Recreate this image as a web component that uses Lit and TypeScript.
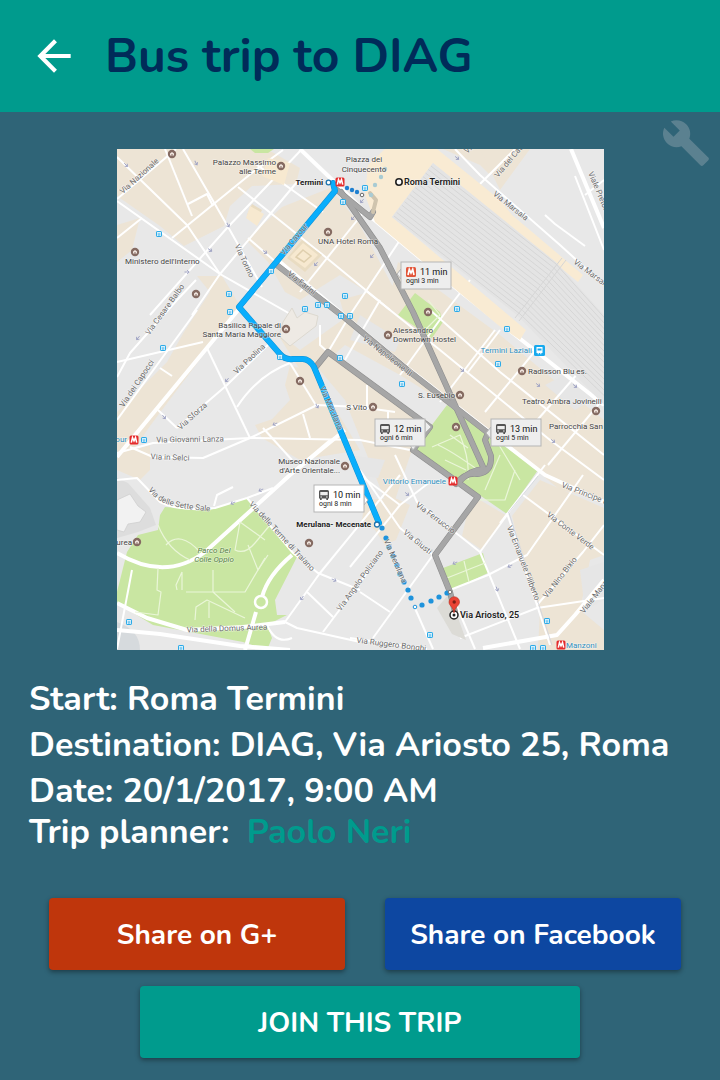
import { LitElement, html, css, svg } from "lit";
import { customElement } from "lit/decorators.js";

type Street = { t: string; x: number; y: number; r: number; start?: boolean };
type Place = { t: string; x: number; y: number; kind?: string; anchor?: string };

const blocks = [
  "M117 149H254L272 152 300 168 296 184 252 186 230 206 224 226 184 246 160 226 117 196Z",
  "M246 240L282 207 330 188 358 222 368 240 400 300 380 300 340 275 300 300 285 292 268 262Z",
  "M117 225L140 218 132 250 117 262Z",
  "M197 276L222 276 240 306 207 350 150 426 130 455 117 455 117 412 167 362 184 332 210 292Z",
  "M275 330L300 350 345 318 340 300 395 285 430 310 480 350 520 385 604 440V500L560 490 500 440 440 400 400 375 345 345 315 372 330 400 360 450 300 460 262 438 255 425 317 404 300 370Z",
  "M398 262L425 280 500 335 560 385 604 420V470L540 440 470 395 420 360 385 320Z",
  "M290 365L312 372 320 405 262 430 290 400 285 385Z",
  "M330 352L430 428 412 450 395 500 385 500 345 400 318 368Z",
  "M365 500L395 498 410 505 396 540 385 545 375 530 362 520Z",
  "M443 149H512L490 175 480 165Z",
  "M500 190L530 149H480Z",
  "M480 500L507 516 482 550 462 536 468 510Z",
  "M512 516L540 480 604 508V555L590 560 580 610 604 630V650H538L540 610 528 580Z",
  "M117 455L150 445 150 470 140 480 117 470Z",
];

const greys = [
  "M360 315L400 340 395 352 350 340Z",
  "M545 385L570 372 595 398 575 410Z",
  "M408 308L425 300 430 305 418 318Z",
  "M580 570L604 562V600L585 610Z",
  "M350 455L385 460 378 478 355 475Z",
];

const parks = [
  "M165 507L210 510 247 498 297 557 275 600 277 615 287 615 267 625 272 638 267 650 243 642 153 625 117 603V592L127 552 138 535 158 530 160 515Z",
  "M447 405L538 470 507 514 478 494 460 480 413 450Z",
  "M443 568L483 553 488 573 452 590Z",
  "M398 315L415 293 440 312 443 322 432 338 420 330Z",
  "M250 149H274L268 153H255Z",
];

const roads = [
  "M117 199L176 149",
  "M117 157L187 225 220 274",
  "M117 201L220 274 292 315",
  "M165 149L192 216",
  "M183 149L227 225 262 287",
  "M172 238L253 172 283 150",
  "M188 204L207 194 213 206",
  "M238 187L323 255 390 310",
  "M253 162L323 212",
  "M150 315L227 228 302 149",
  "M192 315L220 274 297 182",
  "M117 238L142 218",
  "M248 238L277 263",
  "M300 292L363 213",
  "M117 362L160 352 203 342",
  "M117 377L130 353 177 300 196 280",
  "M117 420L197 310",
  "M160 368L172 376",
  "M177 428L227 385 270 343",
  "M158 410L177 428",
  "M207 348L250 438",
  "M237 407Q258 375 290 363",
  "M117 453L153 443 250 438 360 440 410 450",
  "M130 447L153 457 203 458 250 438",
  "M250 438L317 405 360 407 395 412",
  "M290 363L317 407",
  "M263 428L292 460",
  "M303 414L310 438",
  "M330 440L283 480",
  "M320 325L320 345 328 352 350 315 400 240",
  "M380 300L345 360",
  "M367 385V410",
  "M388 412V428",
  "M400 375L447 310 470 280",
  "M430 310L500 372 604 455",
  "M468 372L500 330",
  "M440 402L495 330",
  "M485 412L540 345",
  "M520 440L585 365",
  "M548 465L604 398",
  "M365 290L440 350 550 440 604 480",
  "M350 567L400 505 430 482",
  "M360 470L400 528 433 555",
  "M395 455L417 502 480 552",
  "M400 505L360 475",
  "M117 480L137 478 160 502Q180 512 215 508L247 498 273 488",
  "M214 506L217 495 233 487",
  "M247 498L293 553 318 573 360 590",
  "M285 622L320 573 400 475",
  "M285 622L297 628 360 642",
  "M267 625Q276 645 292 638",
  "M323 632L373 565",
  "M307 592L333 617",
  "M360 592L390 612",
  "M117 649L132 570",
  "M350 638L427 649",
  "M460 638L537 608 604 598",
  "M480 552L520 649",
  "M373 638L433 555",
  "M450 590L475 649",
  "M414 606L433 649",
  "M507 515L480 552",
  "M450 590L488 575 527 555 583 475",
  "M523 495L604 555",
  "M537 605L583 552 604 525",
  "M545 465L500 523",
  "M455 149L480 175 560 245 604 285",
  "M480 184L515 149",
  "M545 215L555 224 585 246",
  "M575 176L604 250",
  "M585 195L604 180",
];

const mainRoads = [
  "M336 190L239 309 117 457",
  "M280 262L400 362 545 475 604 502",
  "M372 218L462 293 604 405",
  "M379 525L313 365",
  "M300 149L345 192 365 212",
  "M483 648L557 635 575 615 604 580",
  "M571 149L604 228",
  "M117 603L147 618 187 630 243 627 285 622",
  "M117 553Q165 582 205 552L290 475 345 430",
  "M117 630L160 634 240 646 290 650",
];

const paths = [
  "M158 525Q168 550 190 560 M166 545Q180 530 200 552",
  "M158 568L157 590 161 592 158 615 135 612",
  "M182 572L176 585 177 590M182 572V590M186 592H245L265 558 M213 570V592L235 612",
  "M240 522L235 550Q245 555 255 543L270 525M240 522L265 540 M248 545L258 570 268 555",
  "M195 620L196 607 207 600 245 618 M209 602V618",
  "M432 447L460 435Q470 460 468 480 M438 445Q450 450 478 470M450 435L468 448M445 460L466 470M490 430L520 480M500 455L485 490M478 500L505 500 515 470",
  "M447 578L485 563M464 561L469 582",
  "M428 300L440 315 425 330",
];

const streets: Street[] = [
  { t: "Via Nazionale", x: 141, y: 178, r: -42 },
  { t: "Via Torino", x: 242, y: 262, r: 65 },
  { t: "Via Cavour", x: 296, y: 241, r: -50 },
  { t: "Via Farini", x: 300, y: 285, r: 38 },
  { t: "Via Cesare Balbo", x: 167, y: 311, r: -54 },
  { t: "Via dei Capocci", x: 139, y: 385, r: -56 },
  { t: "Via Paolina", x: 251, y: 361, r: -43 },
  { t: "Via Sforza", x: 194, y: 418, r: -42 },
  { t: "Via Giovanni Lanza", x: 190, y: 442, r: -1 },
  { t: "Via in Selci", x: 170, y: 460, r: 2 },
  { t: "Via delle Terme di Traiano", x: 280, y: 538, r: 47 },
  { t: "Via della Domus Aurea", x: 227, y: 631, r: -2 },
  { t: "Via Merulana", x: 329, y: 409, r: 67 },
  { t: "Via Merulana", x: 393, y: 562, r: 67 },
  { t: "Via Napoleone III", x: 386, y: 358, r: 38 },
  { t: "Via Ferruccio", x: 434, y: 520, r: 37 },
  { t: "Via Giusti", x: 416, y: 544, r: 39 },
  { t: "Via Angelo Poliziano", x: 362, y: 582, r: -54 },
  { t: "Via Ruggero Bonghi", x: 391, y: 647, r: 7 },
  { t: "Via Emanuele Filiberto", x: 521, y: 564, r: 69 },
  { t: "Via Nino Bixio", x: 562, y: 579, r: -52 },
  { t: "Viale Manzoni", x: 584, y: 614, r: -52, start: true },
  { t: "Via Conte Verde", x: 569, y: 533, r: 37 },
  { t: "Via Principe Eugenio", x: 561, y: 487, r: 21, start: true },
  { t: "Via Marsala", x: 509, y: 208, r: 38 },
  { t: "Via Marsala", x: 573, y: 263, r: 37, start: true },
  { t: "Viale Pretoriano", x: 588, y: 173, r: 67, start: true },
  { t: "Via del Castro", x: 498, y: 178, r: -50, start: true },
  { t: "Via", x: 467, y: 154, r: -40, start: true },
];

const places: Place[] = [
  { t: "Palazzo Massimo", x: 276, y: 165, anchor: "end" },
  { t: "alle Terme", x: 276, y: 174, anchor: "end" },
  { t: "Piazza dei", x: 364, y: 162, anchor: "middle" },
  { t: "Cinquecento", x: 364, y: 172, anchor: "middle" },
  { t: "Ministero dell'Interno", x: 125, y: 264 },
  { t: "UNA Hotel Roma", x: 318, y: 244 },
  { t: "Basilica Papale di", x: 281, y: 328, anchor: "end" },
  { t: "Santa Maria Maggiore", x: 281, y: 337, anchor: "end" },
  { t: "Alessandro", x: 393, y: 333 },
  { t: "Downtown Hostel", x: 393, y: 342 },
  { t: "Termini Laziali", x: 532, y: 353, anchor: "end", kind: "transit" },
  { t: "Radisson Blu es.", x: 528, y: 374 },
  { t: "S. Eusebio", x: 455, y: 398, anchor: "end" },
  { t: "Teatro Ambra Jovinelli", x: 522, y: 404 },
  { t: "Parrocchia San", x: 549, y: 429 },
  { t: "S Vito", x: 367, y: 410, anchor: "end" },
  { t: "Museo Nazionale", x: 340, y: 464, anchor: "end" },
  { t: "d'Arte Orientale...", x: 340, y: 473, anchor: "end" },
  { t: "Vittorio Emanuele", x: 446, y: 484, anchor: "end", kind: "transit" },
  { t: "our", x: 127, y: 442, anchor: "end", kind: "transit" },
  { t: "urea", x: 132, y: 545, anchor: "end" },
  { t: "Parco Del", x: 214, y: 553, anchor: "middle", kind: "park" },
  { t: "Colle Oppio", x: 214, y: 562, anchor: "middle", kind: "park" },
  { t: "Manzoni", x: 566, y: 648, kind: "transit" },
  { t: "Termini", x: 323, y: 185, anchor: "end", kind: "stop minor" },
  { t: "Roma Termini", x: 404, y: 185, kind: "stop" },
  { t: "Merulana- Mecenate", x: 371, y: 527, anchor: "end", kind: "stop minor" },
  { t: "Via Ariosto, 25", x: 460, y: 618, kind: "stop" },
];

const pois = [
  [172, 154], [281, 166], [135, 252], [328, 232], [196, 294], [286, 329], [388, 335],
  [522, 371], [460, 395], [596, 411], [373, 407], [345, 466], [300, 381], [428, 312],
  [456, 427], [137, 542], [309, 543],
];

const busStops = [
  [159, 234], [229, 294], [230, 312], [163, 348], [271, 271], [345, 296], [305, 309],
  [318, 305], [327, 305], [341, 316], [350, 316], [280, 357], [340, 358], [457, 309],
  [507, 329], [498, 364], [402, 384], [144, 440], [129, 622], [181, 648], [365, 188],
  [343, 202], [430, 635], [533, 648], [543, 648], [547, 621],
];

const metros = [[340, 182], [134, 440], [453, 481], [561, 645]];

const walkDots = [
  [382, 528], [386, 538], [389, 547], [393, 556], [397, 565], [400, 574], [404, 582],
  [408, 590], [411, 598], [422, 605], [431, 601], [439, 597], [447, 593],
];

const arrows = [
  [228, 225, 60], [187, 272, 0], [210, 250, 35], [126, 165, 45], [196, 163, 60], [265, 252, 35],
  [316, 264, 130], [353, 218, 130], [138, 338, 130], [227, 380, 130], [317, 406, 60],
  [275, 424, 155], [164, 417, 50], [457, 158, 40], [362, 201, 130], [372, 256, 130],
  [462, 370, 40], [538, 385, 40], [575, 386, 40], [553, 441, 40], [407, 494, 40], [455, 563, 155],
  [510, 566, 155], [497, 589, 70], [334, 580, 25], [302, 598, 125], [233, 503, 155], [261, 490, 155],
];

const metroM = (x: number, y: number, s: number, fill: string) => svg`
  <rect x=${x - s / 2} y=${y - s / 2} width=${s} height=${s} rx="1.5" fill=${fill}></rect>
  <path transform="translate(${x - s / 2} ${y - s / 2}) scale(${s / 10})"
    d="M2 8 3.3 2.4 5 6 6.7 2.4 8 8" fill="none" stroke="#fff" stroke-width="1.7"></path>`;

const busIcon = (x: number, y: number) => svg`
  <g transform="translate(${x} ${y})">
    <path fill="#555" d="M1.5 0h7Q10 0 10 1.5V8.5H9v1.5H7.300V8.500H2.700V10H1V8.500H0V1.500Q0 0 1.500 0Z"></path>
    <path fill="#eee" d="M1.300 2h7.400v3.200H1.300ZM1.400 6.400h1.600v1.200H1.400ZM7 6.400h1.600v1.200H7Z"></path>
  </g>`;

const callout = (x: number, y: number, title: string, sub: string, tail: string, light = false, metro = false) => svg`
  <path class=${light ? "callout light" : "callout"} d=${tail}></path>
  <rect class=${light ? "callout light" : "callout"} x=${x} y=${y} width="50" height="27"></rect>
  ${metro ? metroM(x + 10, y + 10, 10, "#e2553a") : busIcon(x + 5, y + 5)}
  <text class="time" x=${x + 19} y=${y + 13}>${title}</text>
  <text class="every" x=${x + 5} y=${y + 21}>${sub}</text>`;

@customElement("trip-map")
export class TripMap extends LitElement {
  static styles = css`
    :host { display: block; font-weight: 400; }
    svg { display: block; width: 100%; height: auto; font-family: Roboto, "Liberation Sans", sans-serif; }
    .beige { fill: #ede4d5; }
    .grey { fill: #e6e6e6; }
    .park { fill: #c9e6a2; }
    .road { fill: none; stroke: #fff; stroke-width: 2; stroke-linejoin: round; }
    .main { stroke-width: 4; }
    .path { stroke-width: 1.2; stroke: #eaf6d8; }
    .hall { fill: #f9ebd3; }
    .track { fill: none; stroke: #d6d6d6; stroke-width: 1; }
    .route { fill: none; stroke-linejoin: round; stroke-linecap: round; }
    .alt-edge { stroke: #8f8f8f; stroke-width: 6; }
    .alt { stroke: #a6a6a6; stroke-width: 4.8; }
    .best-edge { stroke: #1391d4; stroke-width: 6; }
    .best { stroke: #0aaefc; stroke-width: 5; }
    .street, .place { font-size: 8px; paint-order: stroke; stroke: #fff; stroke-opacity: 0.5; stroke-width: 1.2px; }
    .street { fill: #6b6b6b; text-anchor: middle; }
    .start { text-anchor: start; }
    .place { fill: #444; }
    .transit { fill: #2f8fc0; }
    .park-name { fill: #55803f; font-style: italic; }
    .stop { fill: #222; font-size: 9px; font-weight: 600; }
    .minor { font-size: 8px; font-weight: 700; }
    .callout { fill: #eee; stroke: #b5b5b5; stroke-width: 1; }
    .light { fill: #fff; }
    .time { font-size: 9px; fill: #111; }
    .every { font-size: 7px; fill: #222; }
  `;

  private poi([x, y]: number[]) {
    return svg`<circle cx=${x} cy=${y} r="4.200" fill="#856b62"></circle>
      <path d="M${x - 2} ${y + 1.6}V${y - 0.4}L${x} ${y - 2}L${x + 2} ${y - 0.4}V${y + 1.6}Z" fill="#f1e6df"></path>
      <path d="M${x - 0.5} ${y + 1.6}v-1.500h1v1.500z" fill="#856b62"></path>`;
  }

  private busStop([x, y]: number[]) {
    return svg`<rect x=${x - 2.5} y=${y - 2.5} width="5" height="5" rx="0.600" fill="#d8f0fc" stroke="#2aaae8"></rect>
      <path d="M${x - 1.2} ${y}h2.400M${x - 1} ${y + 1.3}h.6M${x + 0.5} ${y + 1.3}h.6" stroke="#2aaae8" stroke-width="0.900"></path>`;
  }

  render() {
    const tracks = Array.from({ length: 15 }, (_, i) => {
      const k = i / 14;
      const x1 = 431 - k * 37, y1 = 166 + k * 50;
      const x2 = 556 - k * 36, y2 = 264 + k * 50;
      return `M${x1} ${y1}L${x2} ${y2}L${620 - k * 4} ${335 + k * 72}`;
    });
    const alternatives = [
      "M337 190L370 217 373 212",
      "M341 192L380 248 413 312 455 405 484 469Q470 470 460 481",
      "M278 266L345 318 410 372 488 433 485 440 491 456Q492 472 478 474 465 472 456 484",
      "M315 368L328 352 430 427 413 450 452 478 478 497 435 555 450 592 455 612",
    ];
    const best = "M333 183L335 191 239 307 280 354Q285 360 293 359H301Q309 358 314 367L379 523";
    return html`
      <svg viewBox="117 149 487 501" role="img" aria-label="Map of the route from Roma Termini to Via Ariosto, 25">
        <rect x="117" y="149" width="487" height="501" fill="#e8e8e8"></rect>
        ${blocks.map((d) => svg`<path class="beige" d=${d}></path>`)}
        ${greys.map((d) => svg`<path class="grey" d=${d}></path>`)}
        <path fill="#ddd" d="M117 478L128 483 150 508 156 525 138 532 117 538Z"></path>
        <path fill="#f2f2f2" stroke="#cfcfcf" stroke-width="0.800" d="M117 500L130 494 138 506 146 512 140 522 128 524 124 532 117 530Z"></path>
        <path fill="#d6dadd" d="M117 622Q140 630 140 650H117Z"></path>
        ${parks.map((d) => svg`<path class="park" d=${d}></path>`)}
        ${roads.map((d) => svg`<path class="road" d=${d}></path>`)}
        ${mainRoads.map((d) => svg`<path class="road main" d=${d}></path>`)}
        ${paths.map((d) => svg`<path class="road path" d=${d}></path>`)}
        <path class="road main" d="M292 555Q268 575 262 597M256 612L245 650"></path>
        <circle cx="261" cy="602" r="6" fill="#c9e6a2" stroke="#fff" stroke-width="2.500"></circle>
        <path class="road" stroke-width="4" d="M507 513L550 645"></path>
        <path d="M509 513L552 645M538 476L508 513" fill="none" stroke="#cfd2dc" stroke-width="0.800"></path>
        <path class="hall" d="M385 149H437L500 200 512 215 583 275 578 282 556 264 433 163 392 217 526 330 520 340 498 325 375 222 365 195 368 165Z"></path>
        <path fill="#e4e4e4" d="M433 163L557 263 604 315V405L517 315 392 217Z"></path>
        ${tracks.map((d) => svg`<path class="track" d=${d}></path>`)}
        <path class="track" d="M562 258L515 318M566 260L519 321"></path>
        <path fill="#e9dcc2" d="M252 204L262 210 256 222 247 215ZM302 240L322 255 305 272 287 258Z"></path>
        <path fill="#f7e9d0" d="M268 158L290 163 284 185 262 176ZM250 206L264 214 257 226 246 218ZM303 243L318 255 305 268 290 257Z"></path>
        <path fill="none" stroke="#dfcfae" stroke-width="1.500" d="M303 250L311 256 304 262 296 257Z"></path>
        <path fill="#eeeae4" stroke="#ddd9d0" d="M283 322L292 308 297 318 305 312 318 316 316 326 290 346 279 336Z"></path>
        <path fill="#dcdbd6" d="M437 608L449 594 456 612 466 640 452 634Z"></path>
        ${arrows.map(([x, y, r]) => svg`<path transform="translate(${x} ${y}) rotate(${r})" d="M-2.500 0H2M0-1.800 2.200 0 0 1.800" fill="none" stroke="#9fa3c4" stroke-width="0.900"></path>`)}
        ${alternatives.map((d) => svg`<path class="route alt-edge" d=${d}></path>`)}
        ${alternatives.map((d) => svg`<path class="route alt" d=${d}></path>`)}
        <path class="route" stroke="#cfc4ae" stroke-width="4" d="M373 212L376 200 370 193"></path>
        ${[[371, 195], [375, 185], [381, 177], [385, 169]].map(([x, y]) => svg`<circle cx=${x} cy=${y} r="2.200" fill="#a9cbd3"></circle>`)}
        <path class="route best-edge" d=${best}></path>
        <path class="route best" d=${best}></path>
        ${walkDots.map(([x, y]) => svg`<circle cx=${x} cy=${y} r="2.600" fill="#1e93dc"></circle>`)}
        ${pois.map((p) => this.poi(p))}
        ${busStops.map((p) => this.busStop(p))}
        ${metros.map(([x, y]) => metroM(x, y, 9, "#e52b2b"))}
        <rect x="534" y="345" width="11" height="11" rx="1.500" fill="#16a9ee"></rect>
        <path d="M536.500 347h6v6h-1.200v1.200h-1v-1.200h-1.600v1.200h-1v-1.200h-1.200Z" fill="#fff"></path>
        <path d="M537.500 348.500h4v2h-4Z" fill="#16a9ee"></path>
        ${streets.map((s) => svg`<text class=${s.start ? "street start" : "street"} transform="translate(${s.x} ${s.y}) rotate(${s.r})">${s.t}</text>`)}
        <path id="sette-sale" fill="none" d="M148 490C160 506 175 508 216 512"></path>
        <text class="street start"><textPath href="#sette-sale">Via delle Sette Sale</textPath></text>
        ${places.map((p) => svg`<text class="place ${p.kind === "park" ? "park-name" : p.kind ?? ""}" text-anchor=${p.anchor ?? "start"} x=${p.x} y=${p.y}>${p.t}</text>`)}
        ${[[347, 188], [352, 190], [357, 192]].map(([x, y]) => svg`<circle cx=${x} cy=${y} r="2.200" fill="#1e7fd0"></circle>`)}
        <circle cx="362" cy="195" r="1.800" fill="#fff" stroke="#666"></circle>
        <circle cx="415" cy="607" r="1.800" fill="#fff" stroke="#1e93dc"></circle>
        <circle cx="450" cy="592" r="1.800" fill="#fff" stroke="#777"></circle>
        <circle cx="328.500" cy="182.500" r="2.300" fill="#fff" stroke="#1c74ae" stroke-width="1.300"></circle>
        <circle cx="377" cy="524.500" r="2.500" fill="#fff" stroke="#1c74ae" stroke-width="1.300"></circle>
        <circle cx="399" cy="182" r="3.200" fill="#fff" stroke="#222" stroke-width="1.600"></circle>
        ${callout(401, 262, "11 min", "ogni 3 min", "M401 269L397 274 401 279Z", false, true)}
        ${callout(375, 419, "12 min", "ogni 6 min", "M425 421L431 427 425 433ZM410 445L413 450 417 445Z")}
        ${callout(491, 419, "13 min", "ogni 5 min", "M491 427L486 433 491 439Z")}
        ${callout(314, 485, "10 min", "ogni 8 min", "M364 495L368 500 364 505Z", true)}
        <circle cx="454" cy="615" r="4" fill="#fff" stroke="#222" stroke-width="1.500"></circle>
        <circle cx="454" cy="615" r="1.500" fill="#222"></circle>
        <path d="M454 613C453 606 449 606 449 602A5.200 5.200 0 0 1 459.500 602C459.500 606 455 606 454 613Z" fill="#ea4335" stroke="#b93221" stroke-width="0.600"></path>
        <circle cx="454.200" cy="602" r="1.700" fill="#7b1f16"></circle>
      </svg>`;
  }
}

@customElement("app-root")
export class AppRoot extends LitElement {
  static styles = css`
    :host {
      display: block;
      min-height: 100vh;
      background: #2f6477;
      color: #fff;
      font-family: Nunito, "Open Sans", "Noto Sans", sans-serif;
      font-weight: 700;
    }
    header {
      display: flex;
      align-items: center;
      gap: 26px;
      height: 112px;
      padding-left: 29px;
      background: #009b8d;
    }
    button { font: inherit; color: inherit; border: 0; padding: 0; cursor: pointer; }
    .icon-button { display: block; background: none; }
    .icon-button svg { display: block; width: 50px; height: 50px; }
    h1 { margin: 0; font-size: 48px; line-height: 64px; font-weight: 700; color: #002b59; }
    .stage { display: grid; grid-template-columns: 1fr minmax(0, 487px) 1fr; }
    .map { grid-column: 2; margin-top: 37px; }
    .tools { justify-self: end; align-self: start; padding: 6px 9px 0 0; color: #5b8190; }
    .details { display: flex; flex-direction: column; margin: 26px 29px 0; font-size: 34px; }
    .details p { margin: 0; line-height: 46px; }
    .details .planner { line-height: 36px; }
    a { color: #009b8d; text-decoration: none; margin-left: 8px; }
    .share { display: grid; grid-template-columns: 1fr 1fr; gap: 40px; margin: 48px 39px 0 49px; }
    .action {
      height: 72px;
      padding-top: 2px;
      border-radius: 4px;
      font-size: 28px;
      box-shadow: 0 2px 5px rgba(0, 0, 0, 0.4);
    }
    .google { background: #bf360c; }
    .facebook { background: #0d47a1; }
    .join { display: block; width: 440px; max-width: 90%; margin: 16px auto 0; background: #009b8d; }
  `;

  render() {
    return html`
      <header>
        <button class="icon-button" aria-label="Back">
          <svg viewBox="0 0 24 24" fill="#fff"><path d="M20 11H7.830l5.590-5.590L12 4l-8 8 8 8 1.410-1.410L7.830 13H20v-2z"></path></svg>
        </button>
        <h1>Bus trip to DIAG</h1>
      </header>
      <main>
        <section class="stage">
          <trip-map class="map"></trip-map>
          <div class="tools">
            <button class="icon-button" aria-label="Trip settings">
              <svg viewBox="0 0 24 24" fill="currentColor"><path d="M22.700 19l-9.100-9.100c.9-2.300.4-5-1.500-6.900-2-2-5-2.400-7.400-1.300L9 6 6 9 1.600 4.700C.4 7.100.9 10.100 2.900 12.100c1.900 1.900 4.600 2.400 6.900 1.500l9.100 9.100c.4.4 1 .4 1.400 0l2.300-2.300c.5-.4.5-1.100.1-1.400z"></path></svg>
            </button>
          </div>
        </section>
        <section class="details">
          <p>Start: Roma Termini</p>
          <p>Destination: DIAG, Via Ariosto 25, Roma</p>
          <p>Date: 20/1/2017, 9:00 AM</p>
          <p class="planner">Trip planner: <a href="#planner">Paolo Neri</a></p>
        </section>
        <div class="share">
          <button class="action google">Share on G+</button>
          <button class="action facebook">Share on Facebook</button>
        </div>
        <button class="action join">JOIN THIS TRIP</button>
      </main>
    `;
  }
}
